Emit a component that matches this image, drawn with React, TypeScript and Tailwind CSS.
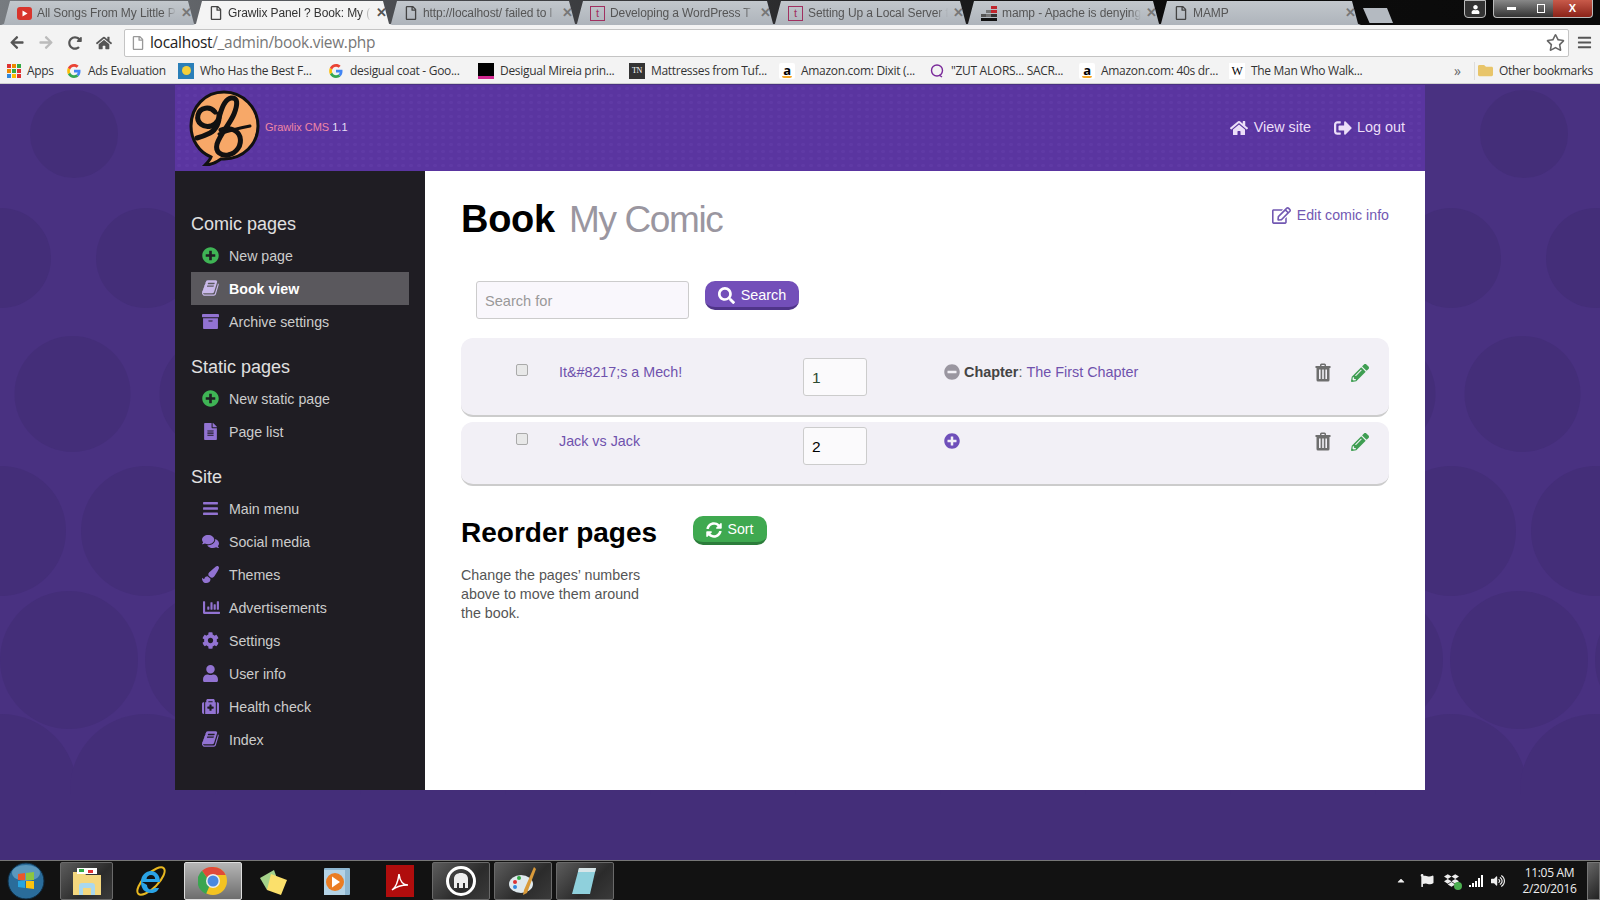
import React from "react";
import {
  FaArrowLeft, FaArrowRight, FaRedoAlt, FaHome, FaRegStar, FaBars, FaRegFile, FaPlusCircle, FaMinusCircle, FaArchive,
  FaFileAlt, FaComments, FaPaintBrush, FaChartBar, FaCog, FaUser, FaMedkit, FaSignOutAlt, FaRegEdit, FaPencilAlt,
  FaSearch, FaSyncAlt, FaFolder, FaVolumeUp, FaFlag, FaCaretUp, FaDropbox,
} from "react-icons/fa";

const bgRows: [number, number, number][] = [
  [134, 44, 74], [258, 50, 1], [394, 58, 72.5], [531, 65, 1], [660, 69, 69], [790, 76, 1], [905, 80, 72],
];

function Pattern() {
  const circles: React.ReactNode[] = [];
  bgRows.forEach(([y, r, x0], i) => {
    for (let k = 0; k < 12; k++) circles.push(<circle key={`${i}-${k}`} cx={x0 + 145 * k} cy={y} r={r} fill="#442e79" />);
  });
  return (
    <svg className="absolute inset-0 w-full h-full" viewBox="0 84 1600 776" preserveAspectRatio="none">
      {circles}
      <rect x="0" y="795" width="1600" height="70" fill="#442e79" />
    </svg>
  );
}

function BookIcon() {
  return (
    <svg viewBox="0 0 1792 1792" width="18" height="18" fill="currentColor">
      <path d="M1639 478q40 57 18 129l-275 906q-19 64-76.500 107.500t-122.500 43.500h-923q-77 0-148.500-53.500t-99.500-131.500q-24-67-2-127 0-4 3-27t4-37q1-8-3-21.500t-3-19.500q2-11 8-21t16.500-23.500 16.500-23.500q23-38 45-91.500t30-91.500q3-10 .5-30t-.5-28q3-11 17-28t17-23q21-36 42-92t25-90q1-9-2.500-32t.5-28q4-13 22-30.500t22-22.500q19-26 42.500-84.500t27.500-96.500q1-8-3-25.500t-2-26.500q2-8 9-18t18-23 17-21q8-12 16.500-30.500t15-35 16-36 19.500-32 26.500-23.500 36-11.500 47.500 5.500l-1 3q38-9 51-9h761q74 0 114 56t18 130l-274 906q-36 119-71.500 153.500t-128.500 34.500h-869q-27 0-38 15-11 16-1 43 24 70 144 70h923q29 0 56-15.500t35-41.500l300-987q7-22 5-57 38 15 59 43zm-1064 2q-4 13 2 22.500t20 9.500h608q13 0 25.500-9.500t16.500-22.500l21-64q4-13-2-22.500t-20-9.500h-608q-13 0-25.500 9.500t-16.500 22.500zm-83 256q-4 13 2 22.500t20 9.500h608q13 0 25.500-9.500t16.500-22.500l21-64q4-13-2-22.500t-20-9.500h-608q-13 0-25.500 9.500t-16.500 22.500z" />
    </svg>
  );
}

function TrashIcon() {
  return (
    <svg viewBox="0 0 16 19" width="16" height="19" className="mr-[20px]">
      <path fillRule="evenodd" d="M5 2Q5 .5 6.500 .5h3Q11 .5 11 2v1h4.500v2h-1v12q0 1.500-1.500 1.500H3q-1.500 0-1.500-1.500V5h-1V3H5zM6.500 3h3V2h-3z" fill="#6e6e6e" />
      <rect x="4" y="6.500" width="1.600" height="9.500" fill="#f2f0f6" /><rect x="7.200" y="6.500" width="1.600" height="9.500" fill="#f2f0f6" /><rect x="10.400" y="6.500" width="1.600" height="9.500" fill="#f2f0f6" />
    </svg>
  );
}

function YouTubeIcon() {
  return (
    <svg width="15" height="13" viewBox="0 0 15 13" className="shrink-0"><rect width="15" height="13" rx="3" fill="#d8342c" /><path d="M5.5 3.5v6l5-3z" fill="#fff" /></svg>
  );
}
function TIcon() {
  return <span className="w-[15px] h-[15px] border border-[#a03060] text-[#a03060] text-[11px] leading-[13px] text-center shrink-0">t</span>;
}
function DocIcon() {
  return <FaRegFile className="text-[14px] text-[#444] shrink-0" />;
}
function StackIcon() {
  return (
    <svg width="16" height="15" viewBox="0 0 16 15" className="shrink-0">
      <rect x="10" y="0" width="6" height="3" fill="#c0262d" /><rect x="5" y="4" width="5" height="3" fill="#777" /><rect x="10" y="4" width="6" height="3" fill="#c0262d" />
      <rect x="0" y="8" width="5" height="3" fill="#555" /><rect x="5" y="8" width="5" height="3" fill="#777" /><rect x="10" y="8" width="6" height="3" fill="#333" />
      <rect x="0" y="12" width="16" height="3" fill="#111" />
    </svg>
  );
}

const tabs = [
  { t: "All Songs From My Little P", i: <YouTubeIcon />, w: "w-[196px]" },
  { t: "Grawlix Panel ? Book: My (", i: <DocIcon />, w: "w-[199px]", active: true },
  { t: "http://localhost/ failed to l", i: <DocIcon />, w: "w-[190px]" },
  { t: "Developing a WordPress T", i: <TIcon />, w: "w-[202px]" },
  { t: "Setting Up a Local Server f", i: <TIcon />, w: "w-[197px]" },
  { t: "mamp - Apache is denying", i: <StackIcon />, w: "w-[197px]" },
  { t: "MAMP", i: <DocIcon />, w: "w-[203px]" },
];

function TabStrip() {
  return (
    <div className="h-[25px] flex items-end pl-[1px] bg-[linear-gradient(90deg,#777b80_0%,#4a4c50_25%,#2a2a2c_50%,#0d0d0d_68%,#0a0a0a_100%)] relative">
      {tabs.map((tab) => (
        <div
          key={tab.t}
          className={`${tab.w} ${tab.active ? "bg-[#f4f4f4] z-10" : "bg-[linear-gradient(180deg,#c2c7cc,#aeb4bb)]"} -mr-[4px] shrink-0 h-[24px] flex items-center pl-[16px] pr-[5px] gap-[5px] [clip-path:polygon(0_100%,3px_95%,9px_0,calc(100%-9px)_0,calc(100%-3px)_95%,100%_100%)]`}
        >
          {tab.i}
          <span className={`flex-1 min-w-0 overflow-hidden whitespace-nowrap text-[12px] tracking-[-0.1px] [mask-image:linear-gradient(90deg,#000_92%,transparent)] ${tab.active ? "text-[#333]" : "text-[#555]"}`}>{tab.t}</span>
          <span className={`text-[13px] font-bold ${tab.active ? "text-[#555]" : "text-[#777]"}`}>✕</span>
        </div>
      ))}
      <div className="w-[30px] h-[15px] ml-[6px] mb-[2px] bg-[#b4bac1] [clip-path:polygon(0_0,80%_0,100%_100%,22%_100%)]" />
      <div className="flex-1" />
      <div className="flex items-start self-start h-[19px] mr-[7px] gap-[3px]">
        <div className="w-[22px] h-[18px] border border-[#bbb] rounded-b-[4px] bg-[#333] flex items-center justify-center"><FaUser className="text-white text-[9px]" /></div>
        <div className="w-[36px] h-[18px] ml-[4px] border-l border-b border-[#bbb] rounded-bl-[4px] bg-[linear-gradient(180deg,#888,#333)] flex items-center justify-center"><span className="w-[9px] h-[3px] bg-white" /></div>
        <div className="w-[24px] h-[18px] -ml-[3px] border-b border-[#bbb] bg-[linear-gradient(180deg,#888,#333)] flex items-center justify-center"><span className="w-[8px] h-[9px] border border-white" /></div>
        <div className="w-[40px] h-[18px] -ml-[3px] border-b border-r border-[#bbb] rounded-br-[4px] bg-[linear-gradient(180deg,#c85a4a,#8a2218)] flex items-center justify-center text-white text-[11px] font-bold">X</div>
      </div>
    </div>
  );
}

function Toolbar() {
  return (
    <div className="h-[33px] pt-[2px] bg-[#f3f3f3] flex items-center">
      <div className="w-[124px] pl-[9px] flex items-center shrink-0">
        <FaArrowLeft className="text-[15px] text-[#555] w-[16px]" />
        <FaArrowRight className="text-[15px] text-[#bbb] w-[16px] ml-[13px]" />
        <FaRedoAlt className="text-[14px] text-[#555] w-[16px] ml-[13px]" />
        <FaHome className="text-[16px] text-[#555] w-[16px] ml-[13px]" />
      </div>
      <div className="flex-1 h-[28px] bg-white border border-[#c4c4c4] rounded-[2px] flex items-center pl-[6px] pr-[2px]">
        <FaRegFile className="text-[14px] text-[#999] mr-[5px]" />
        <span className="text-[15.5px] font-['Open_Sans',sans-serif] text-[#222] tracking-[-0.3px]">localhost</span>
        <span className="text-[15.5px] font-['Open_Sans',sans-serif] text-[#777] tracking-[-0.3px]">/_admin/book.view.php</span>
        <FaRegStar className="ml-auto text-[19px] text-[#666] mr-[1px]" />
      </div>
      <div className="w-[31px] flex justify-center shrink-0"><FaBars className="text-[15px] text-[#555]" /></div>
    </div>
  );
}

function GoogleG() {
  return (
    <svg width="16" height="16" viewBox="0 0 16 16" className="shrink-0">
      <path d="M14.5 8.2c0-.5 0-1-.1-1.4H8v2.7h3.7c-.2.9-.7 1.6-1.4 2.1l2.2 1.7c1.3-1.2 2-3 2-5.1z" fill="#4285f4" />
      <path d="M8 15c1.9 0 3.4-.6 4.5-1.7l-2.2-1.7c-.6.4-1.4.7-2.3.7-1.8 0-3.3-1.2-3.8-2.8L1.9 11.2C3.1 13.5 5.4 15 8 15z" fill="#34a853" />
      <path d="M4.2 9.5C4 9 3.9 8.5 3.9 8s.1-1 .3-1.5L1.9 4.8C1.4 5.7 1.2 6.8 1.2 8s.2 2.3.7 3.2z" fill="#fbbc05" />
      <path d="M8 3.7c1 0 1.9.4 2.6 1l2-2C11.400 1.700 9.800 1 8 1 5.400 1 3.100 2.500 1.900 4.800l2.300 1.700C4.700 4.900 6.200 3.700 8 3.700z" fill="#ea4335" />
    </svg>
  );
}
function AmazonA() {
  return (
    <span className="w-[16px] h-[16px] bg-white rounded-[2px] flex flex-col items-center justify-center shrink-0 relative">
      <span className="text-[13px] leading-[12px] font-bold text-black">a</span>
      <span className="w-[10px] h-[2px] rounded-b-full bg-[#f5a623]" />
    </span>
  );
}

const bookmarks = [
  {
    t: "Apps", w: "w-[59px]", i: (
      <span className="grid grid-cols-3 gap-[1px] w-[14px] h-[14px] shrink-0">
        {["#d33","#e80","#3a4","#e80","#3a4","#d33","#38d","#fb0","#d33"].map((c, k) => <span key={k} style={{ background: c }} />)}
      </span>
    ),
  },
  { t: "Ads Evaluation", w: "w-[112px]", i: <GoogleG /> },
  {
    t: "Who Has the Best F...", w: "w-[150px]", i: (
      <span className="w-[16px] h-[16px] bg-[#2a7fb8] flex items-center justify-center shrink-0"><span className="w-[9px] h-[9px] rounded-full bg-[#f4cf3a]" /></span>
    ),
  },
  { t: "desigual coat - Goo...", w: "w-[150px]", i: <GoogleG /> },
  {
    t: "Desigual Mireia prin...", w: "w-[151px]", i: (
      <span className="w-[16px] h-[16px] bg-black border-b-[3px] border-[#d1278f] shrink-0" />
    ),
  },
  {
    t: "Mattresses from Tuf...", w: "w-[150px]", i: (
      <span className="w-[16px] h-[16px] bg-[#333] text-white text-[8px] leading-[16px] text-center font-['Liberation_Serif',serif] shrink-0">TN</span>
    ),
  },
  { t: "Amazon.com: Dixit (...", w: "w-[150px]", i: <AmazonA /> },
  {
    t: "\"ZUT ALORS... SACR...", w: "w-[150px]", i: (
      <svg width="16" height="16" viewBox="0 0 16 16" className="shrink-0"><circle cx="8" cy="7.500" r="5.500" fill="none" stroke="#7a2a9a" strokeWidth="1.400" /><path d="M10 12l3 2" stroke="#7a2a9a" strokeWidth="1.400" /></svg>
    ),
  },
  { t: "Amazon.com: 40s dr...", w: "w-[150px]", i: <AmazonA /> },
  {
    t: "The Man Who Walk...", w: "w-[200px]", i: (
      <span className="w-[16px] h-[16px] bg-white text-black text-[12px] leading-[16px] text-center font-['Liberation_Serif',serif] shrink-0">W</span>
    ),
  },
];

function Bookmarks() {
  return (
    <div className="h-[26px] bg-[#f3f3f3] border-b border-[#cfcfcf] flex items-center pl-[7px] text-[12px] text-[#333] font-['Open_Sans',sans-serif]">
      {bookmarks.map((b) => (
        <div key={b.t} className={`${b.w} flex items-center gap-[6px] shrink-0 whitespace-nowrap tracking-[-0.3px]`}>
          {b.i}
          <span>{b.t}</span>
        </div>
      ))}
      <span className="ml-[25px] text-[14px] text-[#666] w-[20px]">»</span>
      <span className="w-px h-[18px] bg-[#ddd] mr-[3px]" />
      <FaFolder className="text-[15px] text-[#e8c56a] mr-[6px]" />
      <span className="whitespace-nowrap tracking-[-0.3px]">Other bookmarks</span>
    </div>
  );
}

function Logo() {
  return (
    <svg width="72" height="76" viewBox="0 0 72 76" className="shrink-0">
      <path d="M36 2C17 2 3 17 3 36c0 14 8 26 20 31-1 3-3 5-6 8 7 0 12-3 16-6 1 0 2 0 3 0 19 0 34-15 34-33S55 2 36 2z" fill="#f7a868" stroke="#111" strokeWidth="3" />
      <g fill="none" stroke="#111" strokeWidth="5" strokeLinecap="round" strokeLinejoin="round">
        <path d="M27 22C22 16 12 17 10 25C8 33 16 38 23 36C29 34 32 28 31 24C32 32 28 40 22 43C18 45 13 47 9 48" />
        <path d="M31 28C33 20 37 9 43 8C50 7 50 14 46 24C42 34 32 44 29 54C27 62 33 66 40 65C49 63 54 55 52 47C50 40 42 37 33 40" />
        <path d="M31 44C40 41 52 38 62 36" strokeWidth="3" />
      </g>
    </svg>
  );
}

type NavItem = { t: string; i: React.ReactNode; active?: boolean };

function NavSection({ title, items, className }: { title: string; items: NavItem[]; className: string }) {
  return (
    <div className={className}>
      <h3 className="h-6 text-[18px] leading-6 text-[#e0e0e0]">{title}</h3>
      <ul className="mt-[3px]">
        {items.map((it) => (
          <li key={it.t} className={`h-[33px] pt-[2px] flex items-center pl-[11px] text-[14.2px] ${it.active ? "bg-[#5a585d] text-white font-bold" : "text-[#ccc]"}`}>
            <span className={`w-[27px] -mt-[3px] shrink-0 flex text-[17px] ${it.active ? "text-[#c9b9ea]" : "text-[#9273d2]"}`}>{it.i}</span>
            {it.t}
          </li>
        ))}
      </ul>
    </div>
  );
}

function Sidebar() {
  return (
    <aside className="w-[250px] shrink-0 bg-[#1f1d23] pl-[16px] pr-[16px] pt-[41px]">
      <NavSection title="Comic pages" className="" items={[
        { t: "New page", i: <FaPlusCircle className="text-[#3fb455]" /> },
        { t: "Book view", i: <BookIcon />, active: true },
        { t: "Archive settings", i: <FaArchive /> },
      ]} />
      <NavSection title="Static pages" className="mt-[17px]" items={[
        { t: "New static page", i: <FaPlusCircle className="text-[#3fb455]" /> },
        { t: "Page list", i: <FaFileAlt /> },
      ]} />
      <NavSection title="Site" className="mt-[17px]" items={[
        { t: "Main menu", i: <FaBars /> },
        { t: "Social media", i: <FaComments /> },
        { t: "Themes", i: <FaPaintBrush /> },
        { t: "Advertisements", i: <FaChartBar className="w-[19px]" /> },
        { t: "Settings", i: <FaCog /> },
        { t: "User info", i: <FaUser /> },
        { t: "Health check", i: <FaMedkit /> },
        { t: "Index", i: <BookIcon /> },
      ]} />
    </aside>
  );
}

function PageRow({ title, num, className, chapter, numColor }: { title: string; num: string; className: string; chapter?: boolean; numColor: string }) {
  return (
    <div className={`${className} bg-[#f2f0f6] rounded-[12px] border-b-2 border-[#ccc] flex items-start`}>
      <div className="w-[55px] shrink-0" />
      <div className="w-[43px] shrink-0 pt-[6px]">
        <span className="block w-[12px] h-[12px] border border-[#aaa] rounded-[2px] bg-[#e8e8e8]" />
      </div>
      <div className="w-[244px] shrink-0 text-[14.3px] leading-[20px] pt-[4px] text-[#6f52ad]">{title}</div>
      <div className="w-[141px] shrink-0">
        <div className={`w-[64px] h-[38px] bg-[#fbfafc] border border-[#ccc] rounded-[3px] pl-[8px] text-[15.5px] leading-[38px] ${numColor}`}>{num}</div>
      </div>
      <div className="flex-1 h-[24px] pt-[4px] flex items-center text-[14.4px] leading-[20px]">
        {chapter ? (
          <>
            <FaMinusCircle className="text-[16px] text-[#9a96a0] mr-[4px]" />
            <b className="text-[#444]">Chapter</b>
            <span className="text-[#666]">:&nbsp;</span>
            <span className="text-[#6f52ad]">The First Chapter</span>
          </>
        ) : (
          <FaPlusCircle className="text-[16px] text-[#6f4fba]" />
        )}
      </div>
      <div className="flex items-center pr-[20px] pt-[5px]">
        <TrashIcon />
        <FaPencilAlt className="text-[18px] text-[#3f9e52]" />
      </div>
    </div>
  );
}

function Main() {
  return (
    <main className="flex-1 bg-white px-[36px] text-[14.3px]">
      <div className="h-[110px] flex items-start justify-between pt-[24px]">
        <h1 className="text-[38px] leading-[48px] font-bold text-black tracking-[-0.3px]">
          Book <span className="text-[37px] font-normal text-[#9a96a0] ml-[4px] tracking-[-1.4px]">My Comic</span>
        </h1>
        <a className="mt-[10px] flex items-center text-[#7258b2] text-[14.2px] leading-[20px]">
          <FaRegEdit className="text-[19px] mr-[6px]" />Edit comic info
        </a>
      </div>
      <div className="h-[57px] pl-[15px] flex items-start gap-[16px]">
        <div className="w-[213px] h-[38px] bg-[#f9f7fc] border border-[#ccc] rounded-[3px] pl-[8px] text-[14.6px] leading-[38px] text-[#999]">Search for</div>
        <button className="w-[94px] h-[29px] pt-[4px] bg-[#734fb9] border-b-[3px] border-[#4f3488] rounded-[10px] text-white text-[14.4px] flex items-center justify-center gap-[6px]">
          <FaSearch className="text-[17px] -mt-[2px]" />Search
        </button>
      </div>
      <PageRow title={"It&#8217;s a Mech!"} num="1" className="h-[79px] pt-[20px]" chapter numColor="text-[#2d4a30]" />
      <PageRow title="Jack vs Jack" num="2" className="h-[64px] mt-[5px] pt-[5px]" numColor="text-black" />
      <div className="mt-[30px] flex items-start">
        <div className="w-[232px]">
          <h2 className="text-[28px] leading-[34px] font-bold text-black">Reorder pages</h2>
          <p className="mt-[16px] w-[190px] text-[14.3px] leading-[19px] text-[#555]">Change the pages’ numbers above to move them around the book.</p>
        </div>
        <button className="w-[74px] h-[29px] pt-[2px] bg-[#3fa950] border-b-[3px] border-[#2c7d3b] rounded-[10px] text-white text-[14.2px] flex items-center justify-center gap-[5px]">
          <FaSyncAlt className="text-[16px]" />Sort
        </button>
      </div>
    </main>
  );
}

function Panel() {
  return (
    <div className="relative w-[1250px] mx-auto mt-px">
      <header className="h-[86px] bg-[#5a35a0] bg-[radial-gradient(circle,#5f3aa5_1.6px,transparent_2px)] bg-[length:8px_7px] flex items-center pl-[13px]">
        <Logo />
        <span className="ml-[5px] text-[11px] mt-[-2px] text-[#ef86a5]">Grawlix CMS <span className="text-[#e6dcf5]">1.1</span></span>
        <nav className="ml-auto flex items-center pr-[20px] text-[14.4px] text-[#ecdff8]">
          <FaHome className="text-[18px] mr-[6px]" />View site
          <FaSignOutAlt className="text-[18px] ml-[23px] mr-[5px]" />Log out
        </nav>
      </header>
      <div className="flex h-[619px]">
        <Sidebar />
        <Main />
      </div>
    </div>
  );
}

function TaskButton({ children, active, className }: { children: React.ReactNode; active?: boolean; className: string }) {
  return (
    <div className={`${className} h-[38px] shrink-0 rounded-[2px] flex items-center justify-center ${active ? "bg-[linear-gradient(180deg,#b5b5b5,#6d6d6d)] border border-[#ddd]" : "bg-[linear-gradient(135deg,#5c5c5c,#2b2b2b_60%,#3a3a3a)] border border-[#6a6a6a]"}`}>
      {children}
    </div>
  );
}

function Taskbar() {
  return (
    <div className="h-[40px] bg-[#121212] border-t border-[#777] flex items-center relative z-10 text-white">
      <div className="w-[60px] shrink-0 flex pl-[7px]">
        <svg width="38" height="38" viewBox="0 0 38 38">
          <circle cx="19" cy="19" r="18" fill="#2a6c9a" stroke="#0d2a40" />
          <ellipse cx="19" cy="11" rx="14" ry="8" fill="#8cc4e0" opacity=".5" />
          <path d="M11 12l7-1v7h-7z" fill="#e9572b" /><path d="M19 11l8-1v8h-8z" fill="#8cc63f" />
          <path d="M11 19h7v7l-7-1z" fill="#28a5e0" /><path d="M19 19h8v8l-8-1z" fill="#fdc30f" />
        </svg>
      </div>
      <TaskButton className="w-[53px]">
        <svg width="34" height="32" viewBox="0 0 34 32">
          <path d="M3 7h11l2 3h15v20H3z" fill="#f4d77e" /><rect x="7" y="3" width="20" height="6" fill="#fff" />
          <rect x="9" y="4" width="5" height="3" fill="#3a4" /><rect x="18" y="5" width="5" height="3" fill="#d33" />
          <path d="M9 30v-9q0-3 3-3h10q3 0 3 3v9h-4v-7h-8v7z" fill="#a9d8ef" />
        </svg>
      </TaskButton>
      <div className="w-[76px] shrink-0 flex justify-center">
        <svg width="34" height="34" viewBox="0 0 34 34">
          <ellipse cx="17" cy="17" rx="18" ry="7" transform="rotate(-45 17 17)" fill="none" stroke="#e8b820" strokeWidth="2" />
          <path d="M8 18h18c0-7-4-11-9-11S7 11 7 18s4 11 10 11c4 0 7-2 8-5h-5c-.6 1-1.600 1.500-3 1.500-2.500 0-4-2-4-4.500h0M12.500 15c.3-2.500 2-4 4.500-4s4 1.500 4.200 4z" fill="#2aa3e6" fillRule="evenodd" />
        </svg>
      </div>
      <TaskButton className="w-[58px] -ml-[5px]" active>
        <svg width="30" height="30" viewBox="0 0 30 30">
          <circle cx="15" cy="15" r="14" fill="#f3c322" />
          <path d="M15 1a14 14 0 0 1 12.600 8H15a6 6 0 0 0-5.500 3.500L4 4.800A14 14 0 0 1 15 1z" fill="#e04a3a" />
          <path d="M4 4.800l5.500 7.700a6 6 0 0 0 2 7.500L8 28A14 14 0 0 1 4 4.800z" fill="#3aa54f" />
          <circle cx="15" cy="15" r="7" fill="#eee" /><circle cx="15" cy="15" r="5.500" fill="#4a88e0" />
        </svg>
      </TaskButton>
      <div className="w-[64px] shrink-0 flex justify-center">
        <svg width="32" height="30" viewBox="0 0 32 30">
          <path d="M2 12L16 4l5 14-12 6z" fill="#a4d28a" /><path d="M13 8l16 6-6 15-14-5z" fill="#fbe06b" />
        </svg>
      </div>
      <div className="w-[61px] shrink-0 flex justify-center">
        <svg width="28" height="32" viewBox="0 0 28 32">
          <rect x="1" y="3" width="26" height="27" rx="1" fill="#8db6d0" /><rect x="1" y="5" width="21" height="25" fill="#b4d3e6" />
          <circle cx="12" cy="17" r="9" fill="#ea7d24" /><path d="M9 11.500v11l8-5.500z" fill="#fff" />
        </svg>
      </div>
      <div className="w-[65px] shrink-0 flex justify-center">
        <span className="w-[28px] h-[32px] bg-[#b00d0d] flex items-center justify-center">
          <svg width="20" height="22" viewBox="0 0 20 22"><path d="M2 20c3-2 6-8 7-16 1 8 4 11 9 11-5 0-11 1-16 5z" fill="none" stroke="#fff" strokeWidth="1.500" /></svg>
        </span>
      </div>
      <TaskButton className="w-[58px]">
        <span className="w-[30px] h-[30px] rounded-full border-[3px] border-white flex items-center justify-center">
          <svg width="20" height="18" viewBox="0 0 20 18"><path d="M3 16V7c0-4 3-6 7-6s7 2 7 6v9h-3v-5h-2v5H8v-5H6v5z" fill="#eee" /></svg>
        </span>
      </TaskButton>
      <TaskButton className="w-[58px] ml-[4px]">
        <svg width="32" height="32" viewBox="0 0 32 32">
          <ellipse cx="14" cy="19" rx="12" ry="9" fill="#dfe9ee" /><circle cx="8" cy="17" r="2" fill="#d33" /><circle cx="12" cy="13" r="2" fill="#3a4" /><circle cx="8" cy="22" r="2" fill="#38d" />
          <path d="M27 2l2 2-9 24-4 2 1-5z" fill="#d99a3a" />
        </svg>
      </TaskButton>
      <TaskButton className="w-[58px] ml-[4px]">
        <svg width="32" height="32" viewBox="0 0 32 32">
          <path d="M10 3h17l-6 26H3z" fill="#8fd0dc" /><path d="M10 3h17l-1 4H9z" fill="#d7e5e8" />
        </svg>
      </TaskButton>
      <div className="flex-1" />
      <div className="flex items-center text-[#eee] w-[125px] shrink-0">
        <FaCaretUp className="text-[11px] w-[12px]" />
        <FaFlag className="text-[13px] ml-[13px] w-[14px]" />
        <span className="relative ml-[10px] w-[16px]">
          <FaDropbox className="text-[15px]" />
          <span className="absolute -right-[2px] -bottom-[2px] w-[8px] h-[8px] rounded-full bg-[#4caf50]" />
        </span>
        <span className="ml-[9px] flex items-end gap-[1px] h-[12px]">
          <i className="w-[2px] h-[2px] bg-white" /><i className="w-[2px] h-[4px] bg-white" /><i className="w-[2px] h-[6px] bg-white" /><i className="w-[2px] h-[9px] bg-white" /><i className="w-[2px] h-[12px] bg-white" />
        </span>
        <FaVolumeUp className="text-[14px] ml-[8px]" />
      </div>
      <div className="w-[59px] text-[12px] leading-[16px] text-center font-['Open_Sans',sans-serif] text-[#eee] shrink-0 whitespace-nowrap tracking-[-0.3px]">
        <div>11:05 AM</div>
        <div>2/20/2016</div>
      </div>
      <div className="w-[13px] ml-[8px] h-[38px] border border-[#777] bg-[linear-gradient(135deg,#666,#222)]" />
    </div>
  );
}

export default function App() {
  return (
    <div className="w-[1600px] h-[900px] overflow-hidden flex flex-col font-['Liberation_Sans',Arial,sans-serif]">
      <div className="h-[84px] shrink-0">
        <TabStrip />
        <Toolbar />
        <Bookmarks />
      </div>
      <div className="relative flex-1 bg-[#493181]">
        <Pattern />
        <Panel />
      </div>
      <Taskbar />
    </div>
  );
}
